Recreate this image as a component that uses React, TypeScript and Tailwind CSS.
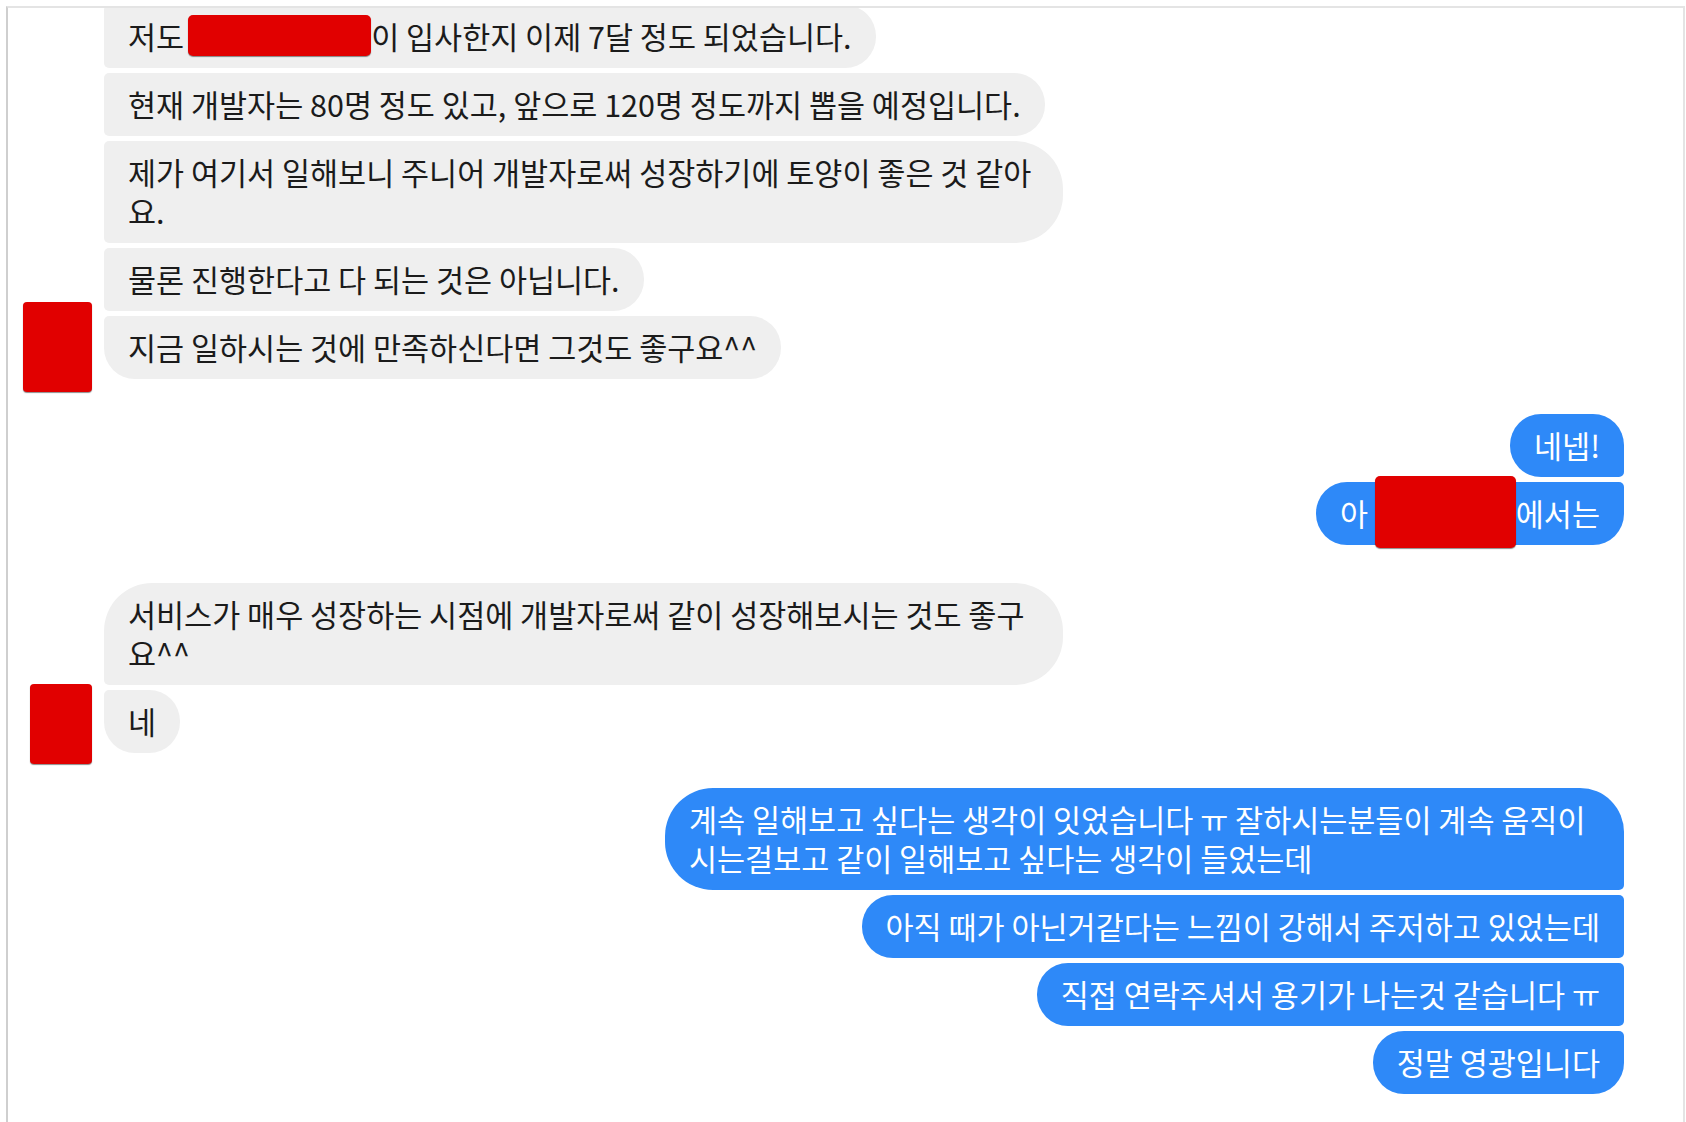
import React from "react";

const font = "font-['Noto_Sans_CJK_KR','Noto_Sans',sans-serif]";

function Redact({ w, h, lift = 0, ml = 0 }: { w: number; h: number; lift?: number; ml?: number }) {
  // inline redaction block, keeps its place in the text line
  return (
    <span
      className="inline-block align-middle relative bg-[#e10000] rounded-[5px] shadow-[0_1px_1px_rgba(0,0,0,0.45)]"
      style={{ width: w, height: h, marginTop: -(h - 30) / 2, marginBottom: -(h - 30) / 2, marginLeft: ml, top: lift }}
    />
  );
}

function Left({ children, shape }: { children: React.ReactNode; shape: string }) {
  return (
    <div className="flex">
      <div className={`bg-[#efefef] text-[#1b1b1b] px-[24px] py-[12px] whitespace-nowrap ${shape}`}>{children}</div>
    </div>
  );
}

function Right({ children, shape }: { children: React.ReactNode; shape: string }) {
  return (
    <div className="flex justify-end">
      <div className={`bg-[#2e89f8] text-white px-[24px] py-[12px] whitespace-nowrap ${shape}`}>{children}</div>
    </div>
  );
}

function Avatar({ className }: { className: string }) {
  return <div className={`absolute bg-[#e10000] rounded-[4px] shadow-[0_1px_1px_rgba(0,0,0,0.45)] ${className}`} />;
}

export default function App() {
  return (
    <div className={`w-[1686px] h-[1122px] bg-white overflow-hidden ${font} text-[30.5px] leading-[39px]`}>
      <div className="ml-[6px] mt-[6px] w-[1679px] h-[1116px] border-t-2 border-l-2 border-r-2 border-t-[#e4e4e4] border-l-[#cfcfcf] border-r-[#e4e4e4] overflow-hidden">
        <div className="flex flex-col pl-[96px] pr-[59px] -mt-[3px]">
          {/* first group, left */}
          <div className="flex flex-col gap-[5px]">
            <Left shape="rounded-l-[5px] rounded-r-[31px]">
              저도<Redact w={183} h={41} lift={-5} ml={4} />이 입사한지 이제 7달 정도 되었습니다.
            </Left>
            <Left shape="rounded-l-[5px] rounded-r-[31px]">
              현재 개발자는 80명 정도 있고, 앞으로 120명 정도까지 뽑을 예정입니다.
            </Left>
            <Left shape="rounded-l-[5px] rounded-r-[48px] w-[959px]">
              제가 여기서 일해보니 주니어 개발자로써 성장하기에 토양이 좋은 것 같아
              <br />
              요.
            </Left>
            <Left shape="rounded-l-[5px] rounded-r-[31px]">물론 진행한다고 다 되는 것은 아닙니다.</Left>
            <div className="relative">
              <Avatar className="-left-[81px] -bottom-[13px] w-[69px] h-[90px]" />
              <Left shape="rounded-tl-[5px] rounded-bl-[31px] rounded-r-[31px]">
                지금 일하시는 것에 만족하신다면 그것도 좋구요^^
              </Left>
            </div>
          </div>

          {/* reply, right */}
          <div className="flex flex-col gap-[5px] mt-[35px]">
            <Right shape="rounded-l-[31px] rounded-tr-[31px] rounded-br-[5px]">네넵!</Right>
            <Right shape="rounded-l-[31px] rounded-tr-[5px] rounded-br-[31px]">
              아 <Redact w={141} h={72} lift={-6} />에서는
            </Right>
          </div>

          {/* second group, left */}
          <div className="flex flex-col gap-[5px] mt-[38px]">
            <Left shape="rounded-tl-[48px] rounded-bl-[5px] rounded-r-[48px] w-[959px]">
              서비스가 매우 성장하는 시점에 개발자로써 같이 성장해보시는 것도 좋구
              <br />
              요^^
            </Left>
            <div className="relative">
              <Avatar className="-left-[74px] -bottom-[11px] w-[62px] h-[80px]" />
              <Left shape="rounded-tl-[5px] rounded-bl-[31px] rounded-r-[31px]">네</Left>
            </div>
          </div>

          {/* second reply, right */}
          <div className="flex flex-col gap-[5px] mt-[35px]">
            <Right shape="rounded-l-[48px] rounded-tr-[44px] rounded-br-[5px] w-[959px]">
              계속 일해보고 싶다는 생각이 잇었습니다 ㅠ 잘하시는분들이 계속 움직이
              <br />
              시는걸보고 같이 일해보고 싶다는 생각이 들었는데
            </Right>
            <Right shape="rounded-l-[31px] rounded-r-[5px]">아직 때가 아닌거같다는 느낌이 강해서 주저하고 있었는데</Right>
            <Right shape="rounded-l-[31px] rounded-r-[5px]">직접 연락주셔서 용기가 나는것 같습니다 ㅠ</Right>
            <Right shape="rounded-l-[31px] rounded-tr-[5px] rounded-br-[31px]">정말 영광입니다</Right>
          </div>
        </div>
      </div>
    </div>
  );
}
